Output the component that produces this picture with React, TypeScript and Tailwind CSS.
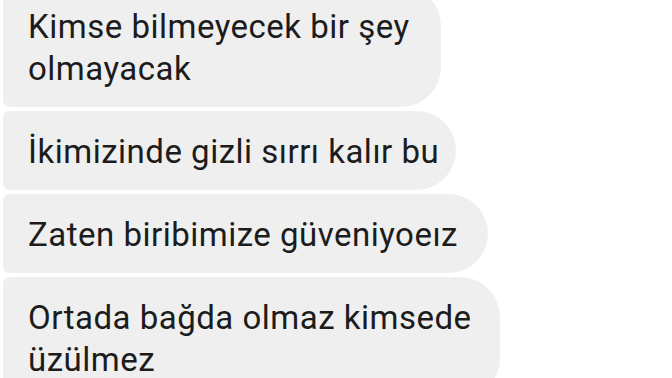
const messages = [
  { lines: ["Kimse bilmeyecek bir şey", "olmayacak"], width: "w-[438px]" },
  { lines: ["İkimizinde gizli sırrı kalır bu"], width: "w-[453px]" },
  { lines: ["Zaten biribimize güveniyoeız"], width: "w-[485px]" },
  { lines: ["Ortada bağda olmaz kimsede", "üzülmez"], width: "w-[497px]" },
];

export default function App() {
  return (
    <div className="h-[378px] w-[672px] overflow-hidden bg-white font-['Roboto',sans-serif]">
      <div className="-mt-[14px] flex flex-col items-start gap-[4px] pl-[3px]">
        {messages.map((m, i) => (
          <div
            key={i}
            className={`${m.width} rounded-l-[7px] rounded-r-[40px] bg-[#efefef] pl-[25px] pr-[20px] pt-[20px] pb-[17px] text-[33px] leading-[42px] tracking-[0.5px] text-[#1c1c1c]`}
          >
            {m.lines.map((line, j) => (
              <div key={j} className="whitespace-nowrap">
                {line}
              </div>
            ))}
          </div>
        ))}
      </div>
    </div>
  );
}
